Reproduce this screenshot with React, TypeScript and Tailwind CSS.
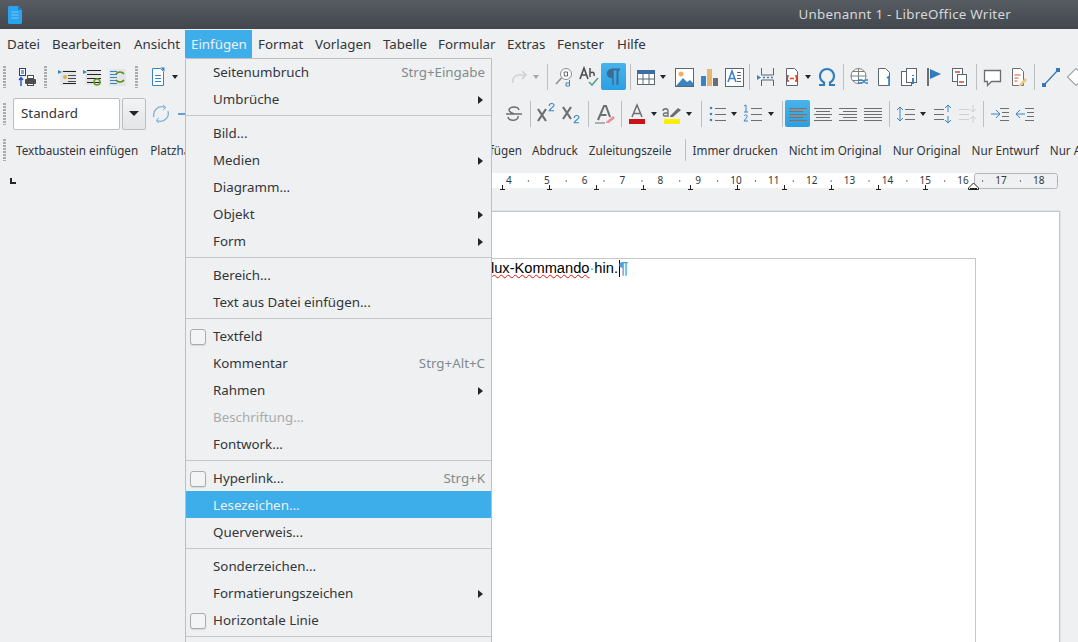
import type { ReactNode } from 'react'

const BLUE = '#3a84c4'
const DARK = '#4d4d4d'

// ===== toolbar bits =====
function Grip() {
  return (
    <div className="w-[3px] h-[22px] shrink-0 bg-[repeating-linear-gradient(to_bottom,#a9abad_0,#a9abad_2px,transparent_2px,transparent_3px)]" />
  )
}

function Sep() {
  return <div className="w-px h-[26px] shrink-0 bg-[#bcbec0]" />
}

function Dd({ className = 'w-[10px]', muted = false }: { className?: string; muted?: boolean }) {
  return (
    <div className={`shrink-0 flex items-center justify-center h-[25px] ${className}`}>
      <div
        className={`w-0 h-0 border-x-[3.5px] border-x-transparent border-t-[4px] ${muted ? 'border-t-[#a5a7a9]' : 'border-t-[#232629]'}`}
      />
    </div>
  )
}

function Ico({ children, active = false, className = '' }: { children?: ReactNode; active?: boolean; className?: string }) {
  return (
    <div
      className={`w-[25px] h-[27px] shrink-0 flex items-center justify-center rounded-[2px] ${active ? 'bg-gradient-to-b from-[#48b3ec] to-[#2aa0e2]' : ''} ${className}`}
    >
      <svg width="24" height="24" viewBox="0 0 24 24" fill="none">
        {children}
      </svg>
    </div>
  )
}

const Lines = ({ x, y, w, n, gap = 3, color = DARK }: { x: number; y: number; w: number; n: number; gap?: number; color?: string }) => (
  <>
    {Array.from({ length: n }).map((_, i) => (
      <rect key={i} x={x} y={y + i * gap} width={w} height="1" fill={color} />
    ))}
  </>
)

function DocIcon({ color = BLUE }: { color?: string }) {
  return <path d="M6.5 3.5h8l3 3v14h-11z" stroke={color} fill="#fff" />
}

function FirstRow() {
  return (
    <div className="h-[37px] flex items-center pl-[3px] overflow-hidden">
      <Grip />
      <Ico className="ml-[7px]">
        <rect x="5.5" y="3.5" width="6" height="7" stroke="#1c3f94" fill="#fff" />
        <path d="M7 6h3M7 8h3" stroke="#1c3f94" />
        <path d="M7 21v-8M5 15l2-2.500L9 15" stroke="#1c4fd0" strokeWidth="1.4" />
        <rect x="11" y="14" width="11" height="5" rx="1" fill={DARK} />
        <rect x="13.500" y="10.500" width="6" height="3" stroke={DARK} fill="#fff" />
        <rect x="13.500" y="18.500" width="6" height="2" stroke={DARK} fill="#fff" />
      </Ico>
      <div className="ml-[6px]"><Grip /></div>
      <Ico className="ml-[7px]">
        <rect x="5" y="5" width="16" height="15" fill="#e4e5e6" />
        <Lines x={8} y={6} w={13} n={2} gap={12} color="#222" />
        <path d="M3 5l4 2-4 2z" fill={BLUE} />
        <circle cx="10" cy="12" r="2" fill="#e0b040" />
        <Lines x={13} y={10} w={8} n={3} />
      </Ico>
      <Ico>
        <rect x="5" y="5" width="16" height="15" fill="#e4e5e6" />
        <Lines x={7} y={5} w={14} n={4} gap={4} color="#222" />
        <path d="M3 5l4 2-4 2z" fill={BLUE} />
        <circle cx="17" cy="17" r="3" stroke="#6a9a2a" strokeWidth="1.5" />
      </Ico>
      <Ico>
        <rect x="4" y="4" width="17" height="17" fill="#e4e5e6" />
        <Lines x={5} y={6} w={7} n={5} color={BLUE} />
        <path d="M11 9a5 5 0 0 1 8 0M19 15a5 5 0 0 1-8 0" stroke="#5a8a1a" strokeWidth="1.6" />
      </Ico>
      <div className="ml-[6px]"><Grip /></div>
      <Ico className="ml-[7px]">
        <DocIcon />
        <path d="M14.500 2.500h4v4z" fill={BLUE} />
        <Lines x={9} y={10} w={6} n={3} color={BLUE} />
      </Ico>
      <Dd />
      <div className="w-[326px] shrink-0" />
      <Ico>
        <path d="M6 18a6 6 0 0 1 6-8h7M15 6l4 4-4 4" stroke="#d0d1d2" strokeWidth="1.5" />
      </Ico>
      <Dd muted />
      <div className="ml-[6px]"><Sep /></div>
      <Ico className="ml-[3px]">
        <circle cx="14" cy="9" r="5.500" stroke="#8a8c8e" fill="#fff" />
        <path d="M9.500 13L4 19" stroke="#8a8c8e" strokeWidth="1.5" />
        <path d="M17.500 15v6h-3.500v-3h3.500" stroke={BLUE} />
        <path d="M12 7h3.500v4h-3z" stroke="#666" />
      </Ico>
      <Ico>
        <path d="M3 14L7 3l4 11M4.500 10h5" stroke={DARK} strokeWidth="1.6" />
        <path d="M13 3v9M13 8c3-2 5 0 4 3" stroke={DARK} strokeWidth="1.5" />
        <path d="M12 17l3 3 6-7" stroke="#53a68e" strokeWidth="1.6" />
      </Ico>
      <Ico active>
        <path d="M11 20V12.500H9.500a4 4 0 0 1 0-8H11z" fill="#3b6d94" stroke="#3b6d94" strokeWidth="1.5" />
        <path d="M15.500 20V5M10 4.500h8" stroke="#3b6d94" strokeWidth="2" />
      </Ico>
      <div className="ml-[4px]"><Sep /></div>
      <Ico className="ml-[2px]">
        <rect x="3.500" y="5.500" width="17" height="14" stroke="#5b6670" fill="#fff" />
        <rect x="3" y="5" width="18" height="4" fill="#3a6ea5" />
        <path d="M3.500 14h17M9 9v10M15 9v10" stroke="#5b6670" />
      </Ico>
      <Dd />
      <Ico className="ml-[3px]">
        <rect x="3.500" y="3.500" width="18" height="18" stroke="#5b6670" fill="#fff" />
        <circle cx="9" cy="9" r="2.500" fill="#f0b060" />
        <path d="M4 21l7-8 4 4 3-2 3 3v3z" fill="#3a84c4" />
      </Ico>
      <Ico>
        <rect x="4" y="11" width="5" height="10" fill="#3a84c4" />
        <rect x="10" y="4" width="5" height="17" fill="#e6b570" />
        <rect x="16" y="13" width="5" height="8" fill="#6c6e70" />
      </Ico>
      <Ico>
        <rect x="3.500" y="3.500" width="18" height="18" stroke="#5b6670" fill="#fff" />
        <path d="M6 17l4-11 4 11M7.500 13.500h5" stroke={BLUE} strokeWidth="1.6" />
        <Lines x={15} y={7} w={4} n={4} color="#5b6670" />
      </Ico>
      <div className="ml-[3px]"><Sep /></div>
      <Ico className="ml-[4px]">
        <path d="M6.500 3v7h12V3M6.500 21v-6h12v6" stroke="#5b6670" fill="none" />
        <path d="M2 10l4 2.500L2 15z" fill={BLUE} />
        <path d="M8 12.500h2M12 12.500h2M16 12.500h2" stroke={BLUE} strokeWidth="1.4" />
      </Ico>
      <Ico>
        <DocIcon color="#5b6670" />
        <path d="M9 11H7.500v5H9M15 11h1.500v5H15M10 13.500h4" stroke="#d8452c" strokeWidth="1.4" />
      </Ico>
      <Dd className="w-[8px]" />
      <Ico className="ml-[2px]">
        <path
          d="M4 20h5v-2.500C6.500 16 5 13.500 5 11a7 7 0 0 1 14 0c0 2.500-1.500 5-4 6.500V20h5"
          stroke="#2f7dbf"
          strokeWidth="2.2"
        />
      </Ico>
      <div className="ml-[4px]"><Sep /></div>
      <Ico className="ml-[2px]">
        <circle cx="11.500" cy="11" r="7.500" stroke="#7d8082" fill="#fff" />
        <path d="M4 11h15M11.500 3.500v15M6 6.500h11M6 15.500h11" stroke="#7d8082" />
        <path d="M11 18h4c2 0 2-3 4-3h2M11 15h4c2 0 2 3 4 3h2" stroke={BLUE} strokeWidth="1.3" />
      </Ico>
      <Ico>
        <path d="M6.500 3.500h7l4 4v13h-11z" stroke="#5b6670" fill="#fff" />
        <path d="M15 13l2-1.500V20" stroke={BLUE} strokeWidth="1.6" />
      </Ico>
      <Ico>
        <rect x="4.500" y="6.500" width="10" height="14" stroke="#5b6670" fill="#fff" />
        <rect x="9.500" y="3.500" width="10" height="14" stroke="#5b6670" fill="#fff" />
        <path d="M16 10v1M16 13v6" stroke={BLUE} strokeWidth="2" />
      </Ico>
      <Ico>
        <rect x="5" y="3" width="2" height="18" fill="#6c6e70" />
        <path d="M8 4l11 5-11 5z" fill="#2f7dbf" />
      </Ico>
      <Ico>
        <rect x="5.500" y="3.500" width="10" height="13" stroke="#5b6670" fill="#fff" />
        <rect x="10.500" y="9.500" width="9" height="11" stroke="#5b6670" fill="#fff" />
        <path d="M8 7h5M12 17h5" stroke="#d8452c" strokeWidth="1.3" />
      </Ico>
      <div className="ml-[5px]"><Sep /></div>
      <Ico className="ml-[3px]">
        <path d="M3.500 5.500h16v11h-9l-4 4v-4h-3z" stroke="#6c6e70" strokeWidth="1.3" fill="#fff" />
      </Ico>
      <Ico>
        <path d="M6.500 3.500h8l3 3v14h-11z" stroke="#6c6e70" fill="#fff" />
        <path d="M8.500 10h6M8.500 13h4M8.500 16h3" stroke="#d8552c" strokeWidth="1.2" />
        <path d="M13 20l6-7 2 2-6 6h-3z" fill="#eec27a" />
      </Ico>
      <div className="ml-[4px]"><Sep /></div>
      <Ico className="ml-[3px]">
        <path d="M5 20L19 5" stroke="#3a77b2" strokeWidth="1.3" />
        <rect x="3" y="18" width="4" height="4" fill="#3a77b2" />
        <rect x="17" y="3" width="4" height="4" fill="#3a77b2" />
      </Ico>
      <Ico>
        <path d="M12 3.500l8.500 8.500-8.500 8.500L3.500 12z" stroke="#6c6e70" fill="#fff" />
      </Ico>
    </div>
  )
}

function AlignIcon({ ws, color }: { ws: [number, number][]; color: string }) {
  return (
    <>
      {ws.map(([x, w], i) => (
        <rect key={i} x={x} y={6 + i * 3} width={w} height="1" fill={color} />
      ))}
    </>
  )
}

function SecondRow() {
  return (
    <div className="h-[37px] flex items-center pl-[3px] overflow-hidden">
      <Grip />
      <div className="ml-[7px] w-[107px] h-[32px] shrink-0 flex items-center pl-[7px] bg-white border border-[#bcbec0] rounded-[2px] text-[13.33px] text-[#31363b]">
        Standard
      </div>
      <div className="ml-[2px] w-[24px] h-[32px] shrink-0 flex items-center justify-center border border-[#bcbec0] rounded-[2px] bg-gradient-to-b from-[#f2f3f4] to-[#e4e5e6]">
        <div className="w-0 h-0 border-x-[5px] border-x-transparent border-t-[5px] border-t-[#232629]" />
      </div>
      <Ico className="ml-[2px]">
        <path d="M5 15a8 8 0 0 1 11-9.500M19 9a8 8 0 0 1-11 9.500" stroke="#7fb0d8" strokeWidth="1.3" />
        <path d="M14 3l3 2.500L14 8M10 16l-3 2.500L10 21" stroke="#7fb0d8" />
      </Ico>
      <Ico>
        <path d="M12 5v15M4 12h16" stroke={BLUE} strokeWidth="1.3" />
      </Ico>
      <div className="w-[303px] shrink-0" />
      <Ico>
        <path d="M17 8c-1-4-9-4-10 0 0 2 3 3 5 4M4 12h16M16 14c1 5-9 6-10 1" stroke="#6c6e70" strokeWidth="1.5" />
      </Ico>
      <div className="ml-[4px]"><Sep /></div>
      <Ico className="ml-[3px]">
        <path d="M3 7l8 12M11 7l-8 12" stroke="#6c6e70" strokeWidth="2.2" />
        <path d="M14 10c0-4 6-4 6-1 0 2-5 4-6 7h6" stroke={BLUE} strokeWidth="1.4" transform="translate(3 -4) scale(.8)" />
      </Ico>
      <Ico>
        <path d="M3 5l8 12M11 5l-8 12" stroke="#6c6e70" strokeWidth="2.2" />
        <path d="M14 10c0-4 6-4 6-1 0 2-5 4-6 7h6" stroke={BLUE} strokeWidth="1.4" transform="translate(3 8) scale(.8)" />
      </Ico>
      <div className="ml-[4px]"><Sep /></div>
      <Ico className="ml-[3px]">
        <path d="M5 18l6-14h2l4 11M7.500 13h6" stroke="#6c6e70" strokeWidth="2" />
        <path d="M13 20l7-6 2 2-6 5h-3z" fill="#ee8f9b" />
        <path d="M2 21h10" stroke="#6c6e70" />
      </Ico>
      <div className="ml-[4px]"><Sep /></div>
      <Ico className="ml-[2px]">
        <path d="M7 15l5-12 5 12M8.500 11.500h7" stroke="#6c6e70" strokeWidth="1.5" />
        <rect x="4" y="17" width="16" height="5" fill="#c9121a" />
      </Ico>
      <Dd />
      <Ico>
        <path d="M3 9c0-3 5-3 5 0v5H4.500C3 14 3 11 5 11h3" stroke="#6c6e70" strokeWidth="1.3" />
        <path d="M10 14l8-8 3 2-8 7h-3z" fill="#6c6e70" />
        <rect x="4" y="17" width="16" height="5" fill="#ffee00" />
      </Ico>
      <Dd />
      <div className="ml-[7px]"><Sep /></div>
      <Ico className="ml-[2px]">
        <circle cx="6" cy="6" r="1.300" fill={BLUE} />
        <circle cx="6" cy="12" r="1.300" fill={BLUE} />
        <circle cx="6" cy="18" r="1.300" fill={BLUE} />
        <Lines x={10} y={6} w={11} n={3} gap={6} color="#6c6e70" />
      </Ico>
      <Dd />
      <Ico>
        <path d="M4 4l2-1v7M4 10h4M4 14c1-2 4-1 3 1l-3 4h4" stroke={BLUE} />
        <Lines x={11} y={6} w={11} n={3} gap={6} color="#6c6e70" />
      </Ico>
      <Dd className="w-[10px] ml-[2px]" />
      <div className="ml-[6px]"><Sep /></div>
      <Ico active className="ml-[2px]">
        <AlignIcon color="#a5673f" ws={[[3, 18], [3, 14], [3, 18], [3, 14], [3, 18]]} />
      </Ico>
      <Ico>
        <AlignIcon color="#6c6e70" ws={[[3, 18], [5, 14], [3, 18], [5, 14], [3, 18]]} />
      </Ico>
      <Ico>
        <AlignIcon color="#6c6e70" ws={[[3, 18], [7, 14], [3, 18], [7, 14], [3, 18]]} />
      </Ico>
      <Ico>
        <AlignIcon color="#6c6e70" ws={[[3, 18], [3, 18], [3, 18], [3, 18], [3, 18]]} />
      </Ico>
      <div className="ml-[4px]"><Sep /></div>
      <Ico className="ml-[3px]">
        <path d="M6 5v14M3 8l3-3 3 3M3 16l3 3 3-3" stroke={BLUE} />
        <Lines x={11} y={7} w={10} n={3} gap={5} color="#6c6e70" />
      </Ico>
      <Dd />
      <Ico className="ml-[2px]">
        <Lines x={3} y={7} w={10} n={2} gap={10} color="#6c6e70" />
        <rect x="3" y="12" width="10" height="1" fill="#6c6e70" />
        <path d="M17 3v7M14 6l3-3 3 3M17 14v7M14 18l3 3 3-3" stroke={BLUE} />
      </Ico>
      <Ico>
        <Lines x={3} y={7} w={10} n={3} gap={5} color="#cfd0d1" />
        <path d="M17 3v7M14 7l3 3 3-3M17 14v7M14 17l3-3 3 3" stroke="#cfd0d1" />
      </Ico>
      <div className="ml-[3px]"><Sep /></div>
      <Ico className="ml-[3px]">
        <Lines x={12} y={6} w={9} n={2} gap={12} color="#6c6e70" />
        <Lines x={14} y={10} w={7} n={2} gap={4} color="#6c6e70" />
        <path d="M3 12h8M8 8l4 4-4 4" stroke={BLUE} />
      </Ico>
      <Ico>
        <Lines x={12} y={6} w={9} n={2} gap={12} color="#6c6e70" />
        <Lines x={14} y={10} w={7} n={2} gap={4} color="#6c6e70" />
        <path d="M12 12H3M7 8l-4 4 4 4" stroke={BLUE} />
      </Ico>
    </div>
  )
}

function Tb({ children, className = 'ml-[11px]' }: { children: ReactNode; className?: string }) {
  return <span className={`shrink-0 whitespace-nowrap pt-px ${className}`}>{children}</span>
}

function ThirdRow() {
  return (
    <div className="h-[36px] flex items-center pl-[3px] overflow-hidden text-[11.7px] text-[#31363b]">
      <Grip />
      <Tb className="ml-[10px]">Textbaustein einfügen</Tb>
      <Tb className="ml-[12px]">Platzhalter</Tb>
      <div className="w-[264px] shrink-0" />
      <Tb className="ml-0">einfügen</Tb>
      <Tb className="ml-[10px]">Abdruck</Tb>
      <Tb className="ml-[11px]">Zuleitungszeile</Tb>
      <div className="ml-[13px] w-px h-[22px] shrink-0 bg-[#bcbec0]" />
      <Tb className="ml-[7px]">Immer drucken</Tb>
      <Tb>Nicht im Original</Tb>
      <Tb>Nur Original</Tb>
      <Tb>Nur Entwurf</Tb>
      <Tb>Nur Ausdruck</Tb>
    </div>
  )
}

function Ruler() {
  const nums = Array.from({ length: 15 }, (_, i) => i + 4)
  const half = Array.from({ length: 16 }, (_, i) => 490 + i * 37.85)
  const tabs = [502, 549, 596, 643, 690, 737, 784, 831, 878, 925]
  return (
    <svg width="700" height="28" viewBox="358 0 700 28" className="shrink-0">
      <rect x="358" y="5" width="700" height="15" fill="#fff" />
      <rect x="974.500" y="5.500" width="83" height="15" rx="2" fill="#eff0f1" stroke="#b4b6b8" />
      {half.map((x) => (
        <rect key={x} x={x} y="12" width="1" height="2" fill="#777" />
      ))}
      {nums.map((n) => (
        <text key={n} x={357.5 + n * 37.85} y="16" fontSize="10" textAnchor="middle" fontFamily="'Noto Sans', sans-serif" fill="#31363b">
          {n}
        </text>
      ))}
      {tabs.map((x) => (
        <path key={x} d={`M${x + 0.5} 17v5M${x - 2} 21.500h5`} stroke="#222" />
      ))}
      <path d="M973.500 15l5 5v1.500h-10V20z" fill="#fff" stroke="#222" />
      <rect x="970" y="20" width="7" height="2" fill="#222" />
    </svg>
  )
}

type MenuEntry =
  | 'sep'
  | { label: string; shortcut?: string; sub?: boolean; check?: boolean; disabled?: boolean; hot?: boolean }

const MENU: MenuEntry[] = [
  { label: 'Seitenumbruch', shortcut: 'Strg+Eingabe' },
  { label: 'Umbrüche', sub: true },
  'sep',
  { label: 'Bild...' },
  { label: 'Medien', sub: true },
  { label: 'Diagramm...' },
  { label: 'Objekt', sub: true },
  { label: 'Form', sub: true },
  'sep',
  { label: 'Bereich...' },
  { label: 'Text aus Datei einfügen...' },
  'sep',
  { label: 'Textfeld', check: true },
  { label: 'Kommentar', shortcut: 'Strg+Alt+C' },
  { label: 'Rahmen', sub: true },
  { label: 'Beschriftung...', disabled: true },
  { label: 'Fontwork...' },
  'sep',
  { label: 'Hyperlink...', shortcut: 'Strg+K', check: true },
  { label: 'Lesezeichen...', hot: true },
  { label: 'Querverweis...' },
  'sep',
  { label: 'Sonderzeichen...' },
  { label: 'Formatierungszeichen', sub: true },
  { label: 'Horizontale Linie', check: true },
  'sep',
]

function InsertMenu() {
  return (
    <div className="absolute left-[185px] top-[58px] w-[307px] h-[600px] bg-[#eff0f1] border border-[#bcbec0] rounded-tl-[2px] text-[13.33px] text-[#31363b]">
      {MENU.map((m, i) =>
        m === 'sep' ? (
          <div key={i} className="h-[7px] pt-[3px]">
            <div className="h-px w-full bg-[#c4c6c8]" />
          </div>
        ) : (
          <div
            key={m.label}
            className={`${i === 0 ? 'h-[26px] pt-px' : 'h-[27px] pt-[2px]'} flex items-center pl-[27px] pr-[6px] ${m.hot ? 'bg-[#3daee9] text-[#eff0f1]' : ''} ${m.disabled ? 'text-[#a9abad]' : ''}`}
          >
            {m.check && (
              <div className="w-[16px] h-[16px] -ml-[23px] mr-[7px] rounded-[3px] border border-[#a9abad] bg-[#f3f4f5] shadow-[0_1px_1px_rgba(0,0,0,0.1)]" />
            )}
            <span>{m.label}</span>
            {m.shortcut && <span className="ml-auto text-[#7f8c8d]">{m.shortcut}</span>}
            {m.sub && (
              <div className="ml-auto mr-[2px] w-0 h-0 border-y-[4.5px] border-y-transparent border-l-[5px] border-l-[#232629]" />
            )}
          </div>
        ),
      )}
    </div>
  )
}

const MENUS = [
  { label: 'Datei', w: 'w-[45px]' },
  { label: 'Bearbeiten', w: 'w-[82px]' },
  { label: 'Ansicht', w: 'w-[57px]' },
  { label: 'Einfügen', w: 'w-[67px]' },
  { label: 'Format', w: 'w-[57px]' },
  { label: 'Vorlagen', w: 'w-[68px]' },
  { label: 'Tabelle', w: 'w-[55px]' },
  { label: 'Formular', w: 'w-[69px]' },
  { label: 'Extras', w: 'w-[50px]' },
  { label: 'Fenster', w: 'w-[60px]' },
  { label: 'Hilfe', w: 'w-[45px]' },
]

export default function App() {
  return (
    <div className="relative w-[1078px] h-[642px] overflow-hidden bg-[#eff0f1] font-['Noto_Sans',sans-serif]">
      {/* Titelleiste */}
      <div className="h-[29px] flex items-center justify-between pl-[8px] pr-[67px] bg-gradient-to-b from-[#575d63] to-[#41474d]">
        <svg width="14" height="18" viewBox="0 0 14 18">
          <path d="M0 1.500A1.500 1.500 0 0 1 1.500 0H10l4 4v12.500a1.500 1.500 0 0 1-1.500 1.500h-11A1.500 1.500 0 0 1 0 16.500z" fill="#2aa3ee" />
          <path d="M10 0l4 4h-4z" fill="#1c7fc0" />
          <path d="M3.500 6h7M3.500 9h7M3.500 12h7" stroke="#7cc8f5" />
        </svg>
        <span className="text-[13.33px] text-[#d5d7d9] tracking-[0.27px]">Unbenannt 1 - LibreOffice Writer</span>
      </div>

      {/* Menüleiste */}
      <div className="h-[29px] flex items-stretch pl-px pt-px text-[13.33px] text-[#31363b]">
        {MENUS.map((m) => (
          <div
            key={m.label}
            className={`${m.w} shrink-0 whitespace-nowrap pl-[6px] pt-[2px] flex items-center ${m.label === 'Einfügen' ? 'bg-[#3daee9] text-[#eff0f1]' : ''}`}
          >
            {m.label}
          </div>
        ))}
      </div>

      <FirstRow />
      <SecondRow />
      <ThirdRow />

      {/* Lineal */}
      <div className="h-[43px] flex items-start justify-between pl-[10px] pr-[20px]">
        <div className="mt-[10px] w-[6px] h-[6px] border-l-2 border-b-2 border-[#232629]" />
        <Ruler />
      </div>

      {/* Dokument */}
      <div className="pl-[284px] pr-[18px]">
        <div className="h-[440px] bg-white border border-[#c4c6c8] pt-[46px] px-[83px] shadow-[0_0_2px_rgba(0,0,0,0.15)]">
          <div className="h-full border-t border-r border-[#c4c6c8] flex font-['Liberation_Sans',sans-serif] text-[14.67px] text-black">
            <div className="w-[250px] pt-px text-right whitespace-nowrap leading-[17px]">
              Hier steht ein{' '}
              <span className="underline decoration-wavy decoration-[#e01010] decoration-1 underline-offset-1">Flux-Kommando</span>
              <span className="text-[#4a90d9]">·</span>hin.
            </div>
            <div className="ml-px w-[8px] h-[17px] mt-px flex items-center justify-center border-l border-black text-[#4f9fdc] text-[17px] font-bold">¶</div>
          </div>
        </div>
      </div>

      <InsertMenu />
    </div>
  )
}
